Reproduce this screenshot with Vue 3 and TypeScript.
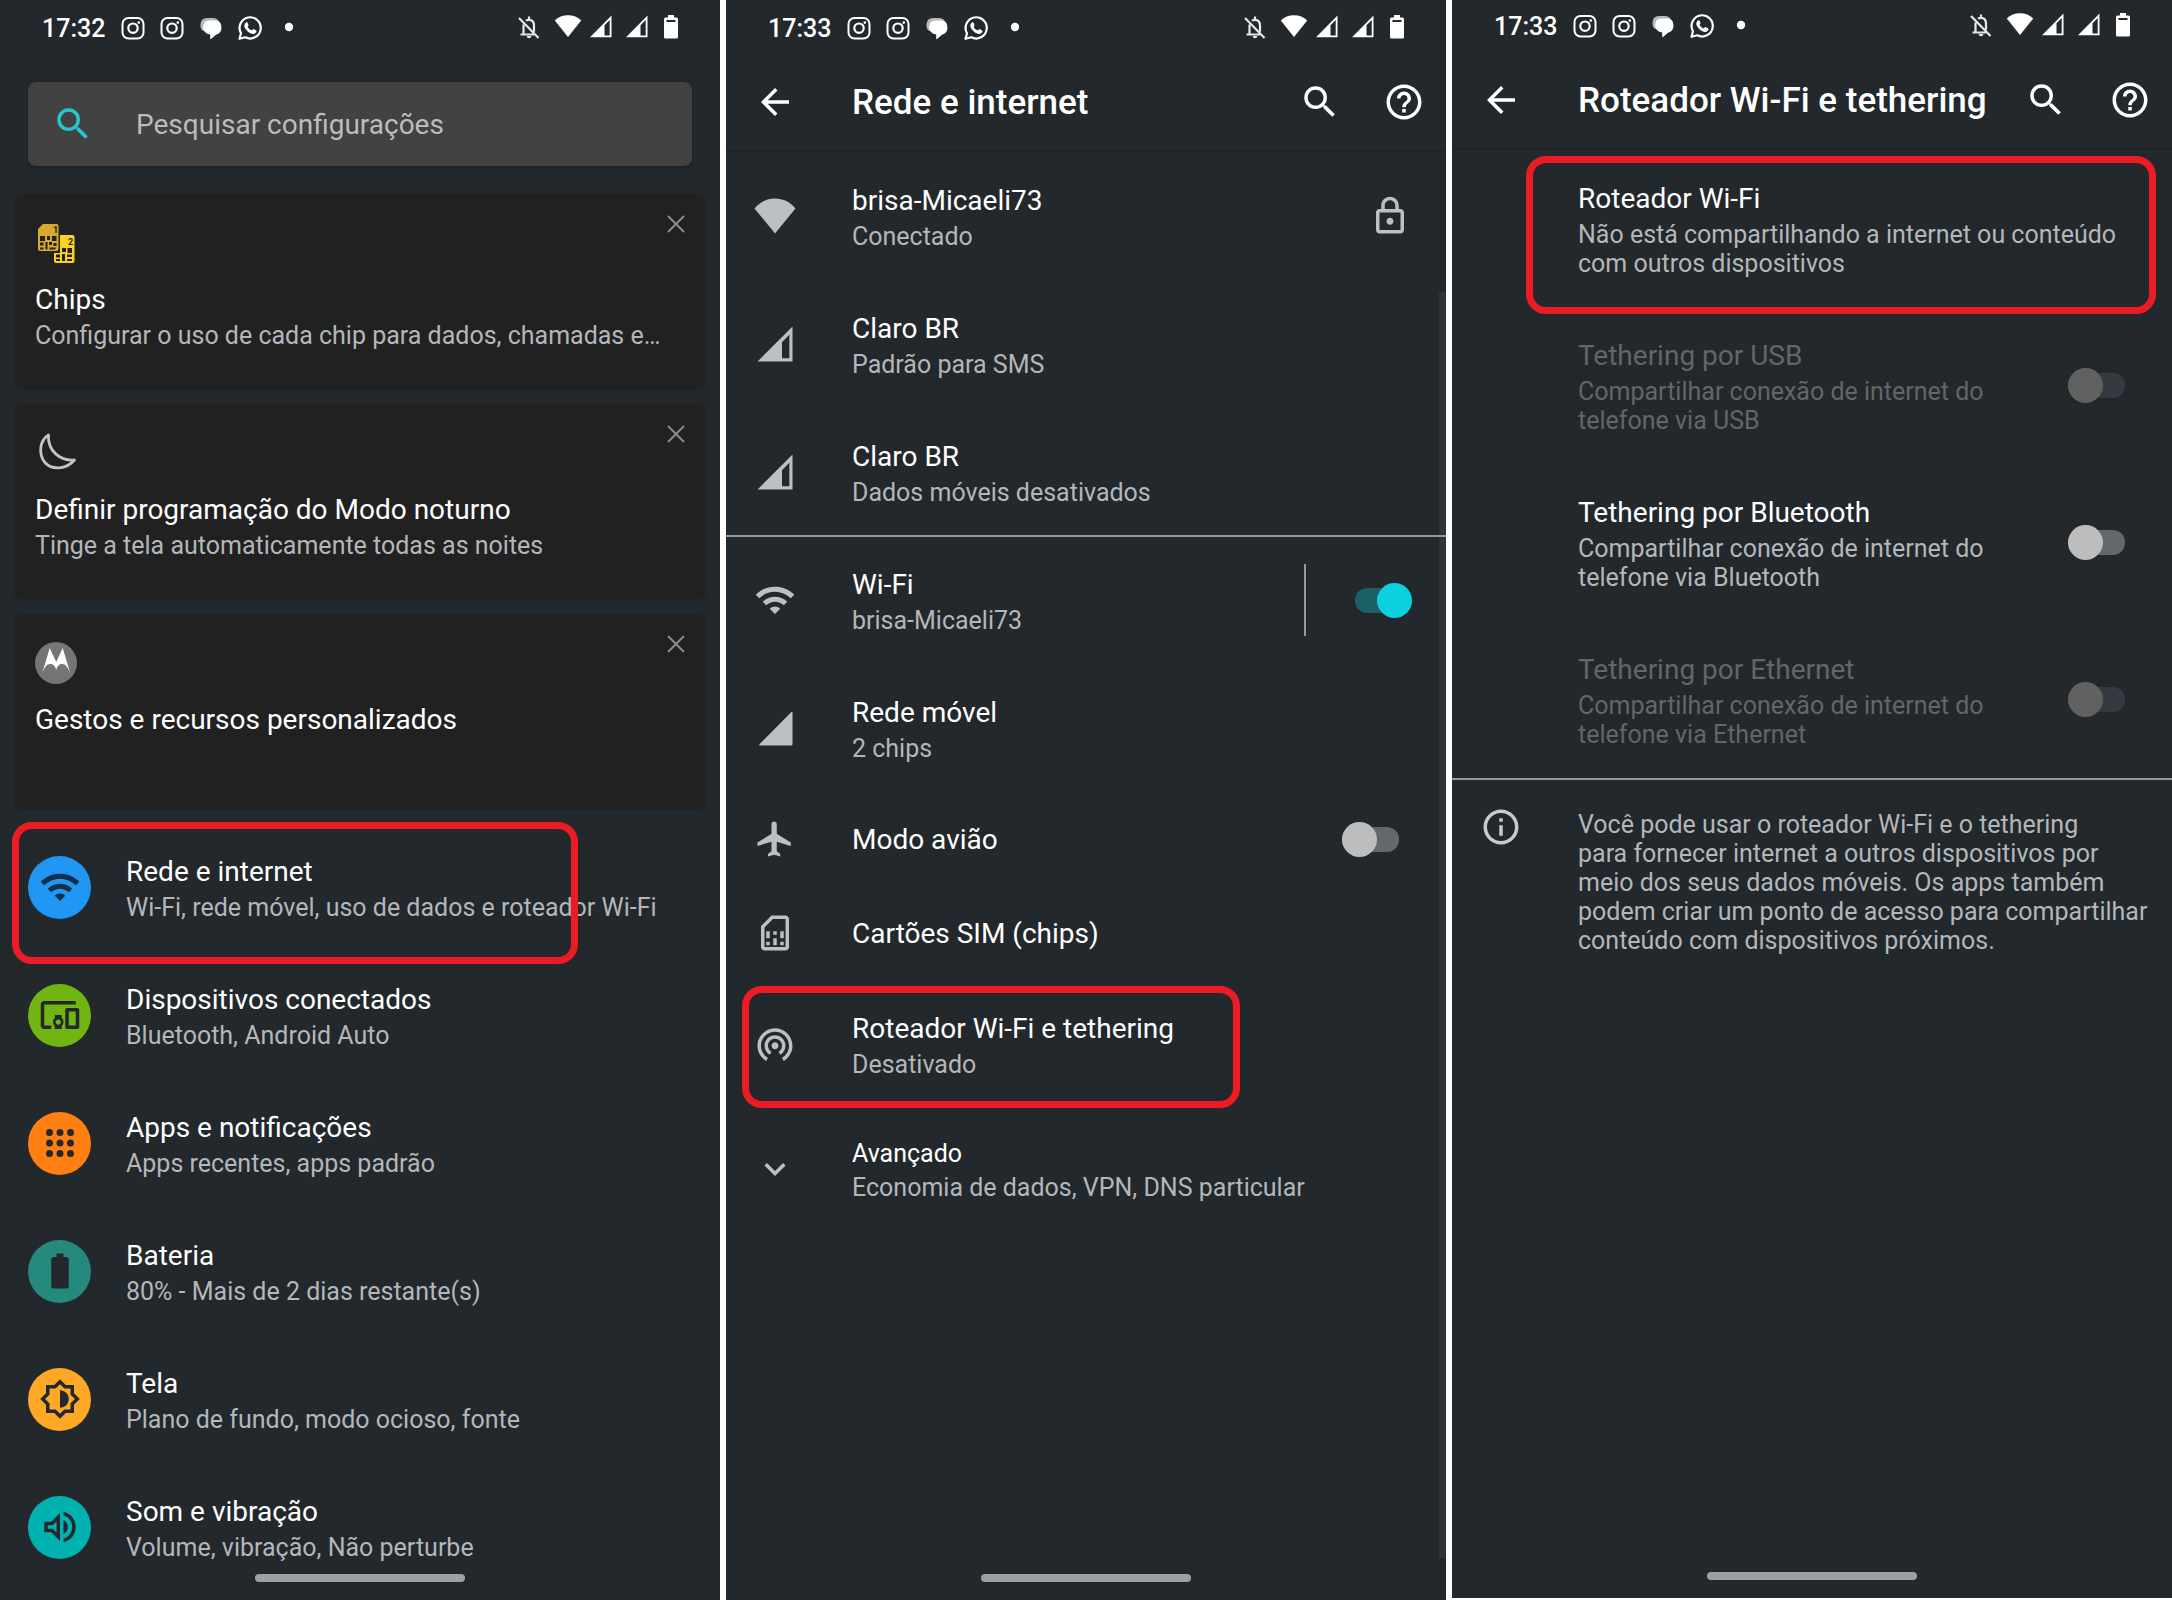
<script setup lang="ts">
import { ref } from 'vue'

interface Row {
  id: string
  title: string
  sub?: string
  icon?: string
  badge?: string
  lock?: boolean
  toggle?: 'on' | 'off'
  split?: boolean
  disabled?: boolean
  compact?: boolean
  mark?: string
}

interface Screen {
  id: string
  time: string
  heading?: string
  groups: Row[][]
  note?: string
  scrollbar?: boolean
}

const paths: Record<string, string> = {
  search:
    'M15.5 14h-.79l-.28-.27A6.471 6.471 0 0 0 16 9.5 6.5 6.5 0 1 0 9.5 16c1.61 0 3.09-.59 4.23-1.57l.27.28v.79l5 4.99L20.49 19l-4.99-5zm-6 0C7.01 14 5 11.99 5 9.5S7.01 5 9.5 5 14 7.01 14 9.5 11.99 14 9.5 14z',
  back: 'M20 11H7.83l5.59-5.59L12 4l-8 8 8 8 1.41-1.41L7.83 13H20v-2z',
  help:
    'M11 18h2v-2h-2v2zm1-16C6.48 2 2 6.48 2 12s4.48 10 10 10 10-4.48 10-10S17.52 2 12 2zm0 18c-4.41 0-8-3.59-8-8s3.59-8 8-8 8 3.59 8 8-3.59 8-8 8zm0-14c-2.21 0-4 1.79-4 4h2c0-1.1.9-2 2-2s2 .9 2 2c0 2-3 1.75-3 5h2c0-2.25 3-2.5 3-5 0-2.21-1.79-4-4-4z',
  info:
    'M11 7h2v2h-2V7zm0 4h2v6h-2v-6zm1-9C6.48 2 2 6.48 2 12s4.48 10 10 10 10-4.48 10-10S17.52 2 12 2zm0 18c-4.41 0-8-3.59-8-8s3.59-8 8-8 8 3.59 8 8-3.59 8-8 8z',
  fan: 'M12 22L.3 7.7C3.2 4 7.400 2 12 2s8.800 2 11.700 5.700z',
  signalPart: 'M2 22h20V2zM16 20.200V11l4.200-4.300v13.500z',
  signal: 'M3.600 22h17.700q.7 0 .7-.7V3.200q0-1-.8-.2L3.200 21.200q-.6.8.4.8z',
  wifi:
    'M1 9l2 2c4.97-4.97 13.03-4.97 18 0l2-2C16.93 2.93 7.08 2.93 1 9zm8 8l3 3 3-3c-1.65-1.66-4.34-1.66-6 0zm-4-4l2 2c2.76-2.76 7.24-2.76 10 0l2-2C15.14 9.14 8.87 9.14 5 13z',
  plane:
    'M21 16v-2l-8-5V3.500c0-.83-.67-1.500-1.500-1.500S10 2.670 10 3.500V9l-8 5v2l8-2.500V19l-2 1.500V22l3.500-1 3.500 1v-1.500L13 19v-5.500l8 2.500z',
  sim:
    'M18 2h-8L4 8v12c0 1.1.9 2 2 2h12c1.1 0 2-.9 2-2V4c0-1.1-.9-2-2-2zm0 2v16H6V8.830L10.830 4H18zM7 17h2v2H7zM15 17h2v2h-2zM7 11h2v4H7zM11 15h2v4h-2zM11 11h2v2h-2zM15 11h2v4h-2z',
  hotspot:
    'M12 11c-1.1 0-2 .9-2 2s.9 2 2 2 2-.9 2-2-.9-2-2-2zm6 2c0-3.31-2.69-6-6-6s-6 2.69-6 6c0 2.22 1.21 4.15 3 5.19l1-1.74c-1.19-.7-2-1.97-2-3.45 0-2.21 1.79-4 4-4s4 1.79 4 4c0 1.48-.81 2.75-2 3.45l1 1.74c1.79-1.04 3-2.97 3-5.19zM12 3C6.480 3 2 7.480 2 13c0 3.700 2.010 6.920 4.990 8.650l1-1.730C5.610 18.530 4 15.960 4 13c0-4.420 3.580-8 8-8s8 3.580 8 8c0 2.960-1.610 5.530-4 6.920l1 1.730c2.990-1.730 5-4.950 5-8.650 0-5.520-4.480-10-10-10z',
  expand: 'M7.41 8.590L12 13.170l4.590-4.580L18 10l-6 6-6-6z',
  lock:
    'M12 17c1.1 0 2-.9 2-2s-.9-2-2-2-2 .9-2 2 .9 2 2 2zm6-9h-1V6c0-2.760-2.240-5-5-5S7 3.240 7 6v2H6c-1.1 0-2 .9-2 2v10c0 1.1.9 2 2 2h12c1.1 0 2-.9 2-2V10c0-1.1-.9-2-2-2zM9 6c0-1.660 1.340-3 3-3s3 1.340 3 3v2H9V6zm9 14H6V10h12v10z',
  devices:
    'M3 6h18V4H3c-1.1 0-2 .9-2 2v12c0 1.1.9 2 2 2h4v-2H3V6zm10 6H9v1.780c-.61.55-1 1.330-1 2.220s.39 1.670 1 2.220V20h4v-1.780c.61-.55 1-1.340 1-2.220s-.39-1.670-1-2.220V12zm-2 5.500c-.83 0-1.500-.67-1.500-1.500s.67-1.500 1.500-1.500 1.500.67 1.500 1.500-.67 1.500-1.500 1.500zM22 8h-6c-.5 0-1 .5-1 1v10c0 .5.5 1 1 1h6c.5 0 1-.5 1-1V9c0-.5-.5-1-1-1zm-1 10h-4v-8h4v8z',
  apps: [6, 12, 18]
    .flatMap((y) => [6, 12, 18].map((x) => `M${x - 2} ${y}a2 2 0 1 0 4 0a2 2 0 1 0-4 0z`))
    .join(''),
  battery: 'M15.670 4H14V2h-4v2H8.330C7.600 4 7 4.600 7 5.330v15.330C7 21.400 7.600 22 8.330 22h7.330c.74 0 1.340-.6 1.340-1.330V5.330C17 4.600 16.400 4 15.670 4z',
  display:
    'M20 8.690V4h-4.690L12 .69 8.690 4H4v4.690L.69 12 4 15.310V20h4.690L12 23.310 15.310 20H20v-4.690L23.310 12 20 8.690zm-2 5.790V18h-3.520L12 20.480 9.520 18H6v-3.520L3.520 12 6 9.520V6h3.520L12 3.520 14.480 6H18v3.520L20.480 12 18 14.480zM12 7v10c2.760 0 5-2.240 5-5s-2.240-5-5-5z',
  sound:
    'M3 9v6h4l5 5V4L7 9H3zm7-.17v6.340L7.830 13H5v-2h2.830L10 8.830zM16.500 12c0-1.770-1.020-3.290-2.500-4.030v8.050c1.480-.73 2.500-2.250 2.500-4.020zM14 3.230v2.060c2.890.86 5 3.540 5 6.710s-2.110 5.850-5 6.710v2.060c4.010-.91 7-4.490 7-8.770s-2.990-7.860-7-8.770z',
}

const cards = ref([
  { id: 'chips', title: 'Chips', sub: 'Configurar o uso de cada chip para dados, chamadas e…' },
  { id: 'night', title: 'Definir programação do Modo noturno', sub: 'Tinge a tela automaticamente todas as noites' },
  { id: 'moto', title: 'Gestos e recursos personalizados', sub: '' },
])

const dismiss = (id: string) => {
  cards.value = cards.value.filter((c) => c.id !== id)
}

const query = ref('')

const screens: Screen[] = [
  {
    id: 'home',
    time: '17:32',
    groups: [
      [
        { id: 'network', title: 'Rede e internet', sub: 'Wi-Fi, rede móvel, uso de dados e roteador Wi-Fi', icon: 'wifi', badge: 'blue', mark: 'mark-network' },
        { id: 'devices', title: 'Dispositivos conectados', sub: 'Bluetooth, Android Auto', icon: 'devices', badge: 'green' },
        { id: 'apps', title: 'Apps e notificações', sub: 'Apps recentes, apps padrão', icon: 'apps', badge: 'orange' },
        { id: 'battery', title: 'Bateria', sub: '80% - Mais de 2 dias restante(s)', icon: 'battery', badge: 'teal' },
        { id: 'display', title: 'Tela', sub: 'Plano de fundo, modo ocioso, fonte', icon: 'display', badge: 'amber' },
        { id: 'sound', title: 'Som e vibração', sub: 'Volume, vibração, Não perturbe', icon: 'sound', badge: 'cyan' },
      ],
    ],
  },
  {
    id: 'internet',
    time: '17:33',
    heading: 'Rede e internet',
    scrollbar: true,
    groups: [
      [
        { id: 'current', title: 'brisa-Micaeli73', sub: 'Conectado', icon: 'fan', lock: true },
        { id: 'sim1', title: 'Claro BR', sub: 'Padrão para SMS', icon: 'signalPart' },
        { id: 'sim2', title: 'Claro BR', sub: 'Dados móveis desativados', icon: 'signalPart' },
      ],
      [
        { id: 'wifi', title: 'Wi-Fi', sub: 'brisa-Micaeli73', icon: 'wifi', toggle: 'on', split: true },
        { id: 'mobile', title: 'Rede móvel', sub: '2 chips', icon: 'signal' },
        { id: 'airplane', title: 'Modo avião', icon: 'plane', toggle: 'off' },
        { id: 'cards', title: 'Cartões SIM (chips)', icon: 'sim' },
        { id: 'hotspot', title: 'Roteador Wi-Fi e tethering', sub: 'Desativado', icon: 'hotspot', mark: 'mark-hotspot' },
        { id: 'advanced', title: 'Avançado', sub: 'Economia de dados, VPN, DNS particular', icon: 'expand', compact: true },
      ],
    ],
  },
  {
    id: 'tethering',
    time: '17:33',
    heading: 'Roteador Wi-Fi e tethering',
    groups: [
      [
        { id: 'router', title: 'Roteador Wi-Fi', sub: 'Não está compartilhando a internet ou conteúdo com outros dispositivos', mark: 'mark-router' },
        { id: 'usb', title: 'Tethering por USB', sub: 'Compartilhar conexão de internet do telefone via USB', toggle: 'off', disabled: true },
        { id: 'bluetooth', title: 'Tethering por Bluetooth', sub: 'Compartilhar conexão de internet do telefone via Bluetooth', toggle: 'off' },
        { id: 'ethernet', title: 'Tethering por Ethernet', sub: 'Compartilhar conexão de internet do telefone via Ethernet', toggle: 'off', disabled: true },
      ],
    ],
    note: 'Você pode usar o roteador Wi-Fi e o tethering\npara fornecer internet a outros dispositivos por\nmeio dos seus dados móveis. Os apps também\npodem criar um ponto de acesso para compartilhar\nconteúdo com dispositivos próximos.',
  },
]
</script>

<template>
  <main class="board">
    <section v-for="screen in screens" :key="screen.id" class="screen" :class="screen.id">
      <div class="status">
        <span class="time">{{ screen.time }}</span>
        <div class="notices">
          <svg v-for="n in 2" :key="n" width="28" height="28" viewBox="0 0 28 28" fill="none" stroke="#fff">
            <rect x="3.500" y="4" width="21" height="20.500" rx="6" stroke-width="2" />
            <circle cx="14" cy="14.200" r="4.700" stroke-width="2.200" />
            <circle cx="19.800" cy="8.600" r="1.300" fill="#fff" stroke="none" />
          </svg>
          <svg width="28" height="28" viewBox="0 0 28 28">
            <path fill="#b5b8ba" d="M10 4h6q4.500 0 6 3.500L6 17Q3 15 3.500 10 4 4 10 4z" />
            <path fill="#fff" d="M12 6.500h6q6.500 0 6.500 7 0 6-5.500 7.200L14 25q-.8.500-.8-.5V20.500Q6.500 19.500 6 13.500q.2-7 6-7z" />
          </svg>
          <svg width="28" height="28" viewBox="0 0 28 28">
            <path fill="none" stroke="#fff" stroke-width="2.200" stroke-linejoin="round" d="M3.500 24.800l1.500-5.600A10.600 10.600 0 1 1 9.300 23.300z" />
            <path fill="#fff" d="M10.300 8.200q.8-.3 1.200.5l1 2.300q.2.600-.9 1.900 1.400 2.700 4.200 3.700 1.300-1.800 1.800-1.500l2.600 1.300q.6.400 0 1.900-1.300 2.200-4.500 1.400Q10.800 18.300 8.500 13q-.8-3 1.800-4.800z" />
          </svg>
          <svg width="28" height="28" viewBox="0 0 28 28"><circle cx="14" cy="13" r="4.200" fill="#fff" /></svg>
        </div>
        <div class="signals">
          <svg width="32" height="28" viewBox="0 0 32 28">
            <path fill="none" stroke="#e6e8e9" stroke-width="2.200" d="M9.500 10.500V20M6.500 20.500H20M12 6.800q1-1 3-1 5 0 5 6v6M15 2.500v3.500M5 4L24.500 24" />
            <path fill="#e6e8e9" d="M12.500 22h5q-.5 2.300-2.500 2.300T12.500 22z" />
          </svg>
          <svg width="28" height="28" viewBox="0 0 28 28"><path fill="#fff" d="M14 23L.8 6.500Q6 1.200 14 1.200t13.200 5.300z" /></svg>
          <svg v-for="n in 2" :key="n" width="28" height="28" viewBox="0 0 28 28">
            <path fill="#fff" fill-rule="evenodd" d="M0 23.200h21.500V1.500zM14.500 21.400V11.200L19.700 6v15.400z" />
          </svg>
          <svg width="16" height="28" viewBox="0 0 16 28">
            <path fill="#fff" fill-rule="evenodd" d="M3.500 3.500h2.500V1h6v2.500h2.500q1.500 0 1.500 1.500v18q0 1.500-1.500 1.500h-11Q2 24.500 2 23V5q0-1.500 1.500-1.500zM4.500 6v2h9V6z" />
          </svg>
        </div>
      </div>

      <header v-if="screen.heading" class="bar">
        <button type="button" class="icon-btn" aria-label="Voltar">
          <svg class="icon" viewBox="0 0 24 24"><path :d="paths.back" /></svg>
        </button>
        <h1>{{ screen.heading }}</h1>
        <button type="button" class="icon-btn" aria-label="Pesquisar">
          <svg class="icon" viewBox="0 0 24 24"><path :d="paths.search" /></svg>
        </button>
        <button type="button" class="icon-btn help" aria-label="Ajuda">
          <svg class="icon" viewBox="0 0 24 24"><path :d="paths.help" /></svg>
        </button>
      </header>

      <template v-else>
        <label class="search">
          <svg class="icon" viewBox="0 0 24 24" aria-hidden="true"><path :d="paths.search" /></svg>
          <input v-model="query" type="text" placeholder="Pesquisar configurações" aria-label="Pesquisar configurações" />
        </label>
        <div class="cards">
          <article v-for="card in cards" :key="card.id" class="card">
            <svg v-if="card.id === 'chips'" class="pic" viewBox="0 0 42 42">
              <path fill="#d9a92b" d="M8 2h13.500q2 0 2 2v23q0 2-2 2H5q-2 0-2-2V7z" />
              <g fill="#212121">
                <path d="M5 14h5v5H5zM12 14h3v4h-3zM17 14h4.500v5H17zM5 20.500h3.500v3H5zM10.500 20h2v7.500h-2zM14 20h3v3h-3zM18.500 21h3v3h-3zM5 25.500h3.500v2H5zM14.500 25.500h6v2h-6z" />
              </g>
              <path fill="#fdd21b" d="M25 13h12.500q2 0 2 2v24q0 2-2 2H21q-2 0-2-2v-8h6z" />
              <path fill="#212121" d="M27 26h4v4h-4zM32.500 26h4.500v5h-4.500zM21 32.500h4v3h-4zM27 32h3v7h-3zM32 32.500h5v2.500h-5zM21 37h4v2h-4zM32 37h5v2h-5z" />
              <text x="18" y="11" class="digit">1</text>
              <text x="33" y="23" class="digit">2</text>
            </svg>
            <svg v-else-if="card.id === 'night'" class="pic" viewBox="0 0 42 42">
              <path fill="none" stroke="#c4c4c4" stroke-width="2.800" stroke-linejoin="round" d="M13.500 3C4 9 3.500 23 10 30.500S31 38 39.500 28C25 29 12.500 19 13.500 3z" />
            </svg>
            <svg v-else class="pic" viewBox="0 0 42 42">
              <circle cx="21" cy="21" r="21" fill="#757575" />
              <path fill="#fff" d="M7 32L14.700 6 21.200 20 27.700 6 35.500 32C33 25 30.500 22 27 22c-3 0-5 2.500-5.800 6-.8-3.500-2.800-6-5.700-6-3.500 0-6 3-8.500 10z" />
            </svg>
            <h2 class="title">{{ card.title }}</h2>
            <p v-if="card.sub" class="sub">{{ card.sub }}</p>
            <button type="button" class="close" aria-label="Fechar" @click="dismiss(card.id)">
              <svg width="18" height="18" viewBox="0 0 18 18"><path d="M1 1l16 16M17 1L1 17" fill="none" stroke="#8c8c8c" stroke-width="2" /></svg>
            </button>
          </article>
        </div>
      </template>

      <ul v-for="(group, g) in screen.groups" :key="g" class="group">
        <li v-for="row in group" :key="row.id" class="row" :class="{ single: !row.sub, compact: row.compact, disabled: row.disabled }">
          <component :is="row.toggle ? 'label' : 'a'" class="link" :for="row.toggle ? row.id : undefined" :href="row.toggle ? undefined : '#' + row.id">
            <span v-if="row.badge" class="badge" :class="row.badge">
              <svg class="icon" viewBox="0 0 24 24"><path :d="paths[row.icon!]" /></svg>
            </span>
            <span v-else class="slot">
              <svg v-if="row.icon" class="icon" viewBox="0 0 24 24"><path fill-rule="evenodd" :d="paths[row.icon]" /></svg>
            </span>
            <span class="text">
              <span class="title">{{ row.title }}</span>
              <span v-if="row.sub" class="sub">{{ row.sub }}</span>
            </span>
          </component>
          <svg v-if="row.lock" class="icon" viewBox="0 0 24 24"><path :d="paths.lock" /></svg>
          <span v-if="row.split" class="divider"></span>
          <input v-if="row.toggle" :id="row.id" type="checkbox" role="switch" class="switch" :class="{ inset: !row.split }" :checked="row.toggle === 'on'" :disabled="row.disabled" />
          <span v-if="row.mark" class="mark" :class="row.mark"></span>
        </li>
      </ul>

      <div v-if="screen.note" class="note">
        <svg class="icon" viewBox="0 0 24 24"><path :d="paths.info" /></svg>
        <p class="sub">{{ screen.note }}</p>
      </div>

      <span v-if="screen.scrollbar" class="scrollbar"></span>
      <span class="home-bar"></span>
    </section>
  </main>
</template>

<style>
body {
  margin: 0;
  background: #fff;
}
</style>

<style scoped>
.board {
  display: grid;
  grid-template-columns: repeat(3, minmax(0, 1fr));
  gap: 6px;
  min-height: 100vh;
  font-family: Roboto, "Liberation Sans", sans-serif;
  color: #fff;
}

.board *,
.board *::before,
.board *::after {
  box-sizing: border-box;
}

.screen {
  position: relative;
  background: #22282c;
  padding-top: 2px;
  overflow: hidden;
}

.screen.tethering {
  padding-top: 0;
  margin-bottom: 2px;
}

h1,
h2,
p,
ul {
  margin: 0;
  padding: 0;
}

button {
  border: 0;
  padding: 0;
  background: none;
  color: inherit;
  cursor: pointer;
}

svg {
  display: block;
  flex: none;
}

.icon {
  width: 42px;
  height: 42px;
  fill: currentColor;
}

.status {
  display: flex;
  align-items: center;
  justify-content: space-between;
  height: 52px;
  padding: 0 42px 0 42px;
}

.time {
  width: 77px;
  padding-top: 2px;
  font-size: 25px;
  line-height: 28px;
  font-weight: 500;
}

.notices {
  display: flex;
  gap: 11px;
  margin-right: auto;
}

.signals {
  display: flex;
  gap: 8px;
}

.bar {
  display: flex;
  align-items: center;
  height: 98px;
  padding: 0 21px 0 28px;
  border-bottom: 2px solid #1e2327;
}

.bar h1 {
  flex: 1;
  margin-left: 56px;
  padding-top: 2px;
  font-size: 35px;
  line-height: 42px;
  font-weight: 500;
  white-space: nowrap;
}

.help {
  margin-left: 42px;
}

.search {
  display: flex;
  align-items: center;
  gap: 42px;
  height: 84px;
  margin: 28px 28px 0;
  padding: 0 24px;
  border-radius: 8px;
  background: #424242;
  color: #26c6d0;
  box-shadow: 0 1px 3px #1a1f23;
}

.search input {
  flex: 1;
  min-width: 0;
  border: 0;
  padding: 2px 0 0;
  outline: 0;
  background: none;
  color: #fff;
  font-family: inherit;
  font-size: 28px;
  line-height: 36px;
}

.search input::placeholder {
  color: #bcbcbc;
  opacity: 1;
}

.cards {
  display: flex;
  flex-direction: column;
  gap: 16px;
  padding: 29px 15px 14px;
}

.card {
  position: relative;
  height: 194px;
  padding: 27px 20px 0;
  border-radius: 8px;
  background: #212121;
  box-shadow: 0 0 2px #1a1e21;
}

.pic {
  width: 42px;
  height: 42px;
  margin-bottom: 18px;
}

.digit {
  font-size: 9px;
  font-weight: 700;
  fill: #212121;
}

.close {
  position: absolute;
  top: 20px;
  right: 20px;
}

.title {
  display: block;
  font-size: 28px;
  line-height: 36px;
  font-weight: 400;
}

.sub {
  display: block;
  margin-top: 3px;
  font-size: 25px;
  line-height: 29px;
  color: #b4b7b9;
}

.group {
  position: relative;
  z-index: 1;
  list-style: none;
}

.group + .group {
  box-shadow: 0 -1px #94999d, 0 1px #94999d inset;
}

.row {
  position: relative;
  display: flex;
  align-items: center;
  min-height: 128px;
  padding: 0 35px 0 28px;
  color: #bdc0c2;
}

.tethering .row {
  min-height: 157px;
}

.row.single {
  min-height: 94px;
}

.row.compact {
  min-height: 122px;
}

.link {
  flex: 1;
  min-width: 0;
  display: flex;
  align-items: center;
  color: inherit;
  text-decoration: none;
}

.slot {
  flex: none;
  width: 42px;
  margin-right: 56px;
}

.text {
  flex: 1;
  min-width: 0;
  padding-top: 2px;
}

.row .title {
  color: #fff;
}

.compact .title {
  font-size: 25px;
  line-height: 32px;
}

.disabled .title,
.disabled .sub {
  color: #626668;
}

.badge {
  flex: none;
  display: grid;
  place-items: center;
  width: 63px;
  height: 63px;
  margin-right: 35px;
  border-radius: 50%;
  color: #22282c;
}

.blue {
  background: #2196f3;
  color: #12304a;
}

.green {
  background: #71b512;
}

.orange {
  background: #ff7f13;
}

.teal {
  background: #26897d;
}

.amber {
  background: #ffa726;
}

.cyan {
  background: #00b2af;
}

.divider {
  width: 2px;
  height: 72px;
  margin-right: 49px;
  background: #94999d;
}

.switch {
  appearance: none;
  position: relative;
  flex: none;
  width: 57px;
  height: 35px;
  margin: 0 -1px 0 0;
}

.switch.inset {
  margin: 0 12px 0 28px;
}

.switch::before {
  content: "";
  position: absolute;
  inset: 5px 0;
  border-radius: 12px;
  background: #64686b;
}

.switch::after {
  content: "";
  position: absolute;
  top: 0;
  left: 0;
  width: 35px;
  height: 35px;
  border-radius: 50%;
  background: #bdbdbd;
}

.switch:checked::before {
  background: #1b6067;
}

.switch:checked::after {
  left: auto;
  right: 0;
  background: #0bd0e0;
}

.switch:disabled::before {
  background: #343a3f;
}

.switch:disabled::after {
  background: #616161;
}

.mark {
  position: absolute;
  z-index: 1;
  border: 7px solid #ed1c24;
  border-radius: 20px;
  pointer-events: none;
}

.mark-network {
  inset: -1px 142px -13px 12px;
}

.mark-hotspot {
  inset: 6px 206px 0 16px;
}

.mark-router {
  inset: 6px 16px -7px 74px;
}

.note {
  display: flex;
  align-items: flex-start;
  gap: 56px;
  padding: 26px 20px 28px 28px;
  border-top: 2px solid #94999d;
  color: #c8cbcd;
}

.note .sub {
  margin-top: 4px;
  white-space: pre-line;
}

.scrollbar {
  position: absolute;
  top: 292px;
  right: 0;
  bottom: 42px;
  width: 7px;
  background: #303439;
}

.home-bar {
  position: absolute;
  bottom: 18px;
  left: 50%;
  width: 210px;
  height: 8px;
  margin-left: -105px;
  border-radius: 4px;
  background: #9e9fa0;
}
</style>
